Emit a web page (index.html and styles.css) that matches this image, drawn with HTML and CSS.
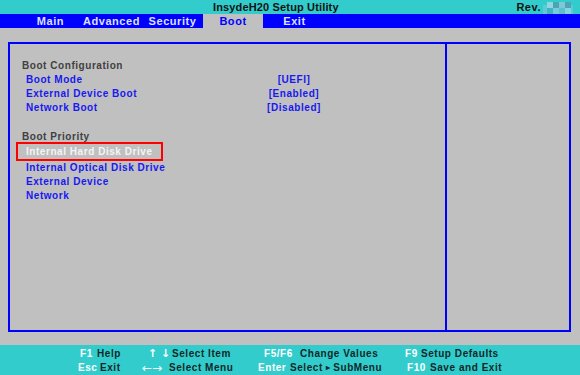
FILE: index.html
```html
<!DOCTYPE html>
<html lang="en">
<head>
  <meta charset="UTF-8" />
  <title>InsydeH20 Setup Utility</title>
  <link rel="stylesheet" href="styles.css">
</head>
<body>
  <div class="titlebar">
    <span class="title">InsydeH20 Setup Utility</span>
    <span class="rev">Rev.</span>
    <svg class="rev-blur" width="30" height="12" viewBox="0 0 30 12">
      <rect x="0" y="3" width="30" height="9" fill="#5fc9d6" />
      <rect x="4" y="0" width="6" height="6" fill="#8fd7e0" />
      <rect x="10" y="0" width="6" height="6" fill="#4aa6b6" />
      <rect x="16" y="0" width="6" height="6" fill="#7cc8d4" />
      <rect x="22" y="0" width="6" height="6" fill="#4aa6b6" />
      <rect x="4" y="6" width="6" height="6" fill="#42b2c6" />
      <rect x="10" y="6" width="6" height="6" fill="#79cbd9" />
      <rect x="16" y="6" width="6" height="6" fill="#5cc0cf" />
      <rect x="22" y="6" width="6" height="6" fill="#86d4de" />
    </svg>
  </div>

  <div class="tabs">
    <span class="tab">Main</span>
    <span class="tab">Advanced</span>
    <span class="tab">Security</span>
    <span class="tab active">Boot</span>
    <span class="tab">Exit</span>
  </div>

  <div class="panel">
    <div class="options">
      <div class="group">Boot Configuration</div>
      <div class="row"><span class="item">Boot Mode</span><span class="value">[UEFI]</span></div>
      <div class="row"><span class="item">External Device Boot</span><span class="value">[Enabled]</span></div>
      <div class="row"><span class="item">Network Boot</span><span class="value">[Disabled]</span></div>

      <div class="group spaced">Boot Priority</div>
      <div class="selected">Internal Hard Disk Drive</div>
      <div class="row"><span class="item">Internal Optical Disk Drive</span></div>
      <div class="row"><span class="item">External Device</span></div>
      <div class="row"><span class="item">Network</span></div>
    </div>
    <div class="help"></div>
  </div>

  <div class="footer">
    <div class="keys">
      <div class="cell c1a"><span class="k">F1</span>Help</div>
      <div class="cell c1b"><span class="k">Esc</span>Exit</div>
    </div>
    <div class="keys">
      <div class="cell c2a"><span class="k arrows">&#8593; &#8595;</span>Select Item</div>
      <div class="cell c2b"><span class="k arrows wide">&#8592;&#8594;</span>Select Menu</div>
    </div>
    <div class="keys">
      <div class="cell c3a"><span class="k">F5/F6</span>Change Values</div>
      <div class="cell c3b"><span class="k">Enter</span>Select <span class="tri">&#9656;</span> SubMenu</div>
    </div>
    <div class="keys">
      <div class="cell c4a"><span class="k">F9</span>Setup Defaults</div>
      <div class="cell c4b"><span class="k">F10</span>Save and Exit</div>
    </div>
  </div>
</body>
</html>
```

FILE: styles.css
```css
/* Base */
* {
  box-sizing: border-box;
  margin: 0;
  padding: 0;
}
body {
  width: 580px;
  height: 375px;
  overflow: hidden;
  background: #c0c0c0;
  font-family: 'Liberation Sans', Arial, sans-serif;
  font-size: 10px;
  font-weight: bold;
  letter-spacing: 0.55px;
  display: flex;
  flex-direction: column;
}
/* Title bar */
.titlebar {
  height: 14px;
  background: #33cccc;
  display: flex;
  align-items: center;
  color: #111;
}
.title {
  margin-left: 213px;
  font-size: 11px;
  letter-spacing: 0.15px;
}
.rev {
  margin-left: auto;
  font-size: 11px;
}
.rev-blur {
  margin: 2px 7px 0 2px;
}
/* Tabs */
.tabs {
  height: 14px;
  background: #0000ff;
  display: flex;
  padding-left: 20px;
}
.tab {
  width: 61px;
  line-height: 14px;
  text-align: center;
  color: #dde0ff;
  font-size: 11px;
}
.tab.active {
  width: 60px;
  margin-right: 1px;
  background: #c0c0c0;
  color: #0000ff;
}
/* Main panel */
.panel {
  margin: 14px 0 0 8px;
  width: 563px;
  height: 290px;
  border: 2px solid #0000ff;
  display: flex;
}
.options {
  width: 437px;
  border-right: 2px solid #0000ff;
  padding: 15px 0 0 12px;
}
.help {
  flex: 1;
}
.group {
  line-height: 14px;
  color: #404040;
}
.group.spaced {
  margin-top: 15px;
}
.row {
  display: flex;
  line-height: 14px;
  padding-left: 4px;
}
.item {
  width: 237px;
  color: #1818f0;
}
.value {
  width: 62px;
  text-align: center;
  color: #1818f0;
}
.selected {
  width: 147px;
  margin: -2px 0 0 -6px;
  border: 2px solid #ff0000;
  line-height: 15px;
  padding-left: 8px;
  color: #f4f4f4;
}
/* Footer */
.footer {
  margin-top: 13px;
  height: 30px;
  background: #33cccc;
  padding-top: 2px;
  display: flex;
  color: #102828;
}
.keys:nth-child(1) { margin-left: 78px; width: 64px; }
.keys:nth-child(2) { width: 116px; }
.keys:nth-child(3) { width: 147px; }
.keys:nth-child(4) { flex: 1; }
.cell {
  display: flex;
  line-height: 14px;
  white-space: nowrap;
}
.k {
  color: #ffffff;
}
.arrows {
  font-family: 'DejaVu Sans', sans-serif;
  font-weight: bold;
  font-size: 11px;
  letter-spacing: 0;
}
.arrows.wide {
  font-size: 12px;
  font-weight: normal;
}
.tri {
  font-size: 8px;
  margin: 0 3px;
}
.c1a { padding-left: 2px; }
.c1a .k { width: 17px; }
.c1b .k { width: 22px; }
.c2a { padding-left: 6px; }
.c2a .k { width: 24px; }
.c2b .k { width: 27px; }
.c3a { padding-left: 6px; }
.c3a .k { width: 36px; }
.c3b .k { width: 32px; }
.c4a .k { width: 16px; }
.c4b { padding-left: 2px; }
.c4b .k { width: 23px; }
```
